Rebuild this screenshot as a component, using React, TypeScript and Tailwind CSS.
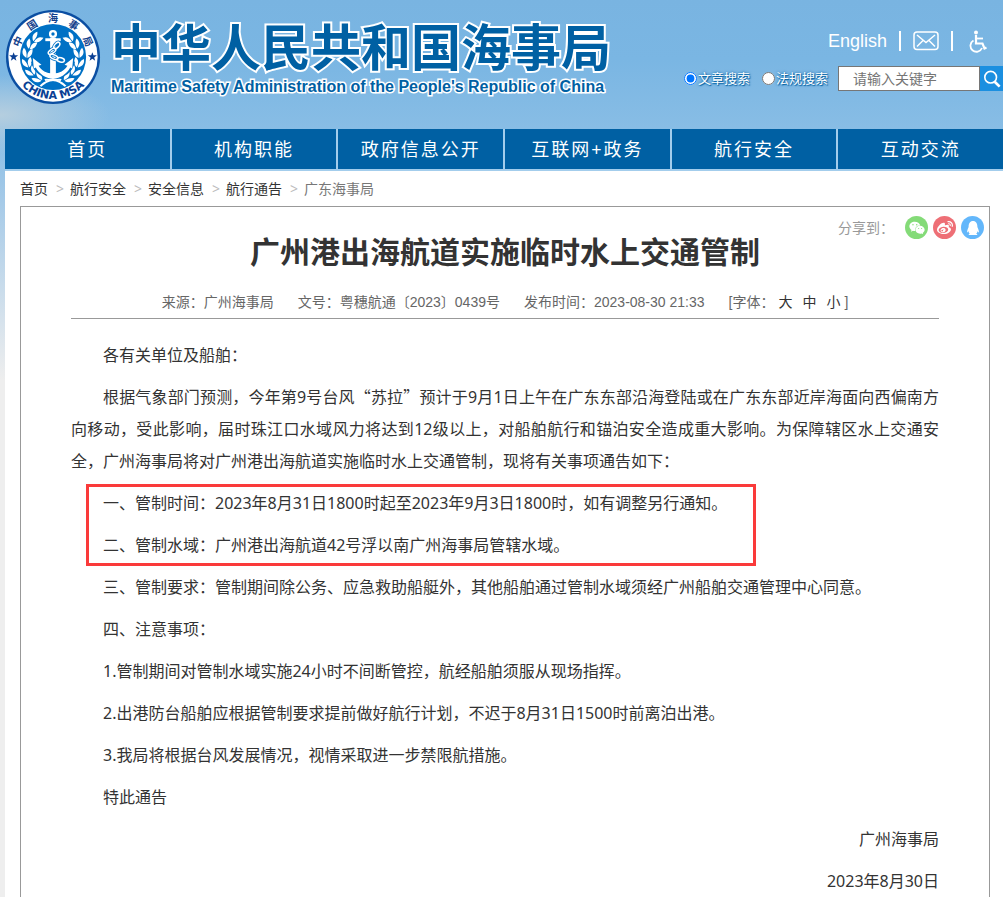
import React from 'react';
import { FaWeixin, FaWeibo, FaQq } from 'react-icons/fa';

const cjk = "font-['Noto_Sans','Noto_Sans_CJK_SC',sans-serif]";
const arial = "font-['Liberation_Sans','Noto_Sans_CJK_SC',sans-serif]";

const navItems = ['首页', '机构职能', '政府信息公开', '互联网+政务', '航行安全', '互动交流'];
const crumbs = ['首页', '航行安全', '安全信息', '航行通告'];

const ring = [
  { t: '中', a: -66 },
  { t: '国', a: -33 },
  { t: '海', a: 0 },
  { t: '事', a: 33 },
  { t: '局', a: 66 },
];

const leaves = [
  { x: 33, y: 30, r: 45 },
  { x: 27, y: 37, r: 25 },
  { x: 23, y: 46, r: 8 },
  { x: 23, y: 56, r: -15 },
  { x: 27, y: 65, r: -35 },
  { x: 34, y: 72, r: -55 },
];

const Emblem: React.FC = () => (
  <svg viewBox="0 0 100 100" className="w-24 h-24 shrink-0" aria-label="中国海事局">
    <circle cx="50" cy="50" r="49" fill="#0a4ea2" />
    <circle cx="50" cy="50" r="46.5" fill="#fff" />
    <circle cx="50" cy="50" r="34.5" fill="#0071c5" />
    <g fontFamily="'Noto Sans CJK SC', sans-serif" fontSize="10.500" fontWeight="700" fill="#123f8c" textAnchor="middle">
      {ring.map((c) => (
        <text key={c.t} x="50" y="14" transform={`rotate(${c.a} 50 50)`}>{c.t}</text>
      ))}
    </g>
    <path id="arc" d="M6 56 A44.5 44.5 0 0 0 94 56" fill="none" />
    <text fontFamily="'DejaVu Sans', sans-serif" fontSize="11.500" fontWeight="700" fill="#0a3f94" textAnchor="middle">
      <textPath href="#arc" startOffset="50%">CHINA MSA</textPath>
    </text>
    <path id="star" d="M9 45l1.200 3.300h3.500l-2.800 2.100 1 3.400L9 51.800l-2.900 2 1-3.400-2.800-2.100h3.500z" fill="#0a3f94" />
    <use href="#star" x="82" />
    {[false, true].map((flip) => (
      <g key={String(flip)} transform={flip ? 'translate(100 0) scale(-1 1)' : undefined} fill="#fff">
        {leaves.map((l) => (
          <g key={l.y} transform={`translate(${l.x} ${l.y}) rotate(${l.r})`}>
            <path d="M0 5C-5 3-6-1-4-5-1-3 0 1 0 5z" />
            <path d="M1 5C0 0 1-3 5-5 6-1 5 3 1 5z" />
          </g>
        ))}
        <path d="M36 80c6-6 12-8 23-7l-1 2c-9-1-15 1-20 6z" />
      </g>
    ))}
    <path d="M50 30v36M31 54c2 9 9 14 19 15 10-1 17-6 19-15" fill="none" stroke="#0071c5" strokeWidth="8" />
    <g fill="none" stroke="#fff">
      <circle cx="50" cy="26" r="3" strokeWidth="2.500" />
      <path d="M42 32h16" strokeWidth="3" />
      <path d="M50 30v38" strokeWidth="6" />
    </g>
    <path d="M29 51l9 7-3 1c3 5 8 8 15 8s12-3 15-8l-3-1 9-7-1 11-2-1c-4 7-10 11-18 12-8-1-14-5-18-12l-2 1z" fill="#fff" />
    <g fill="none" stroke="#0071c5" strokeWidth="3.200">
      <ellipse cx="54" cy="38" rx="4" ry="2.200" transform="rotate(-50 54 38)" />
      <ellipse cx="49" cy="44" rx="4.500" ry="2.200" transform="rotate(-35 49 44)" />
      <ellipse cx="51" cy="50" rx="4.500" ry="2.200" transform="rotate(25 51 50)" />
      <ellipse cx="58" cy="53" rx="4" ry="2.200" transform="rotate(15 58 53)" />
    </g>
    <g fill="none" stroke="#fff" strokeWidth="1.600">
      <ellipse cx="54" cy="38" rx="4" ry="2.200" transform="rotate(-50 54 38)" />
      <ellipse cx="49" cy="44" rx="4.500" ry="2.200" transform="rotate(-35 49 44)" />
      <ellipse cx="51" cy="50" rx="4.500" ry="2.200" transform="rotate(25 51 50)" />
      <ellipse cx="58" cy="53" rx="4" ry="2.200" transform="rotate(15 58 53)" />
    </g>
  </svg>
);

const Header: React.FC = () => (
  <header className="flex justify-between h-[129px] pl-[5px]">
    <div className="flex gap-2.5 pt-[9px]">
      <Emblem />
      <a href="#" className="pt-1 text-[#0060a3] [paint-order:stroke_fill]">
        <h1 className="text-[50px] leading-[62px] font-bold font-['Noto_Sans_CJK_SC',sans-serif] [-webkit-text-stroke:4px_white]">中华人民共和国海事局</h1>
        <p className={`text-base leading-6 font-bold [-webkit-text-stroke:3px_white] ${arial}`}>Maritime Safety Administration of the People's Republic of China</p>
      </a>
    </div>
    <div className={`flex flex-col items-end pt-[26px] text-white ${arial}`}>
      <div className="flex items-center h-[30px] pr-4">
        <a href="#" className="text-lg">English</a>
        <span className="w-0.5 h-5 bg-white mx-3" />
        <a href="#" aria-label="邮箱">
          <svg viewBox="0 0 26 20" className="w-[26px] h-5" fill="none" stroke="#fff" strokeWidth="1.500">
            <rect x="1" y="1" width="24" height="17.500" rx="3" />
            <path d="M4 4l9 7.500L22 4M4 15.500l6-6M22 15.500l-6-6" />
          </svg>
        </a>
        <span className="w-0.5 h-5 bg-white ml-3 mr-4" />
        <a href="#" aria-label="无障碍">
          <svg viewBox="0 0 18 23" className="w-[18px] h-[23px]" fill="none" stroke="#fff" strokeWidth="1.800">
            <circle cx="7" cy="2.500" r="2" fill="#fff" stroke="none" />
            <path d="M7 5v8.500h6.500l2 5 2-1" strokeWidth="2.200" />
            <path d="M7 8.500h7" />
            <path d="M4.500 10.500a6 6 0 1 0 8.500 7.500" />
          </svg>
        </a>
      </div>
      <form className="flex items-center mt-[10px] h-[25px]">
        <label className="flex items-center text-[13px] mr-3 [text-shadow:0_0_3px_#0060a3,1px_1px_1px_#0060a3]">
          <input type="radio" name="kind" defaultChecked className="w-[13px] h-[13px] mr-px" />文章搜索
        </label>
        <label className="flex items-center text-[13px] mr-[10px] [text-shadow:0_0_3px_#0060a3,1px_1px_1px_#0060a3]">
          <input type="radio" name="kind" className="w-[13px] h-[13px] mr-px" />法规搜索
        </label>
        <input
          type="text"
          aria-label="关键字"
          placeholder="请输入关键字"
          className="w-[142px] h-[25px] bg-white border border-[#767676] pl-[14px] text-sm text-gray-700 placeholder:text-[#757575]"
        />
        <button type="button" aria-label="搜索" className="w-[23px] h-[25px] bg-[#1b8fe0] flex items-center justify-center">
          <svg viewBox="0 0 20 20" className="w-[18px] h-[18px]" fill="none" stroke="#fff">
            <circle cx="8.500" cy="8" r="6.500" strokeWidth="1.800" />
            <path d="M13 13l5.500 5.500" strokeWidth="3" />
          </svg>
        </button>
      </form>
    </div>
  </header>
);

const Meta: React.FC = () => (
  <div className={`flex justify-center gap-6 pb-1 border-b border-[#999] text-sm leading-6 text-[#666] ${arial}`}>
    <span>来源：广州海事局</span>
    <span>文号：粤穗航通〔2023〕0439号</span>
    <span>发布时间：2023-08-30 21:33</span>
    <span className="flex">
      [字体：
      <button type="button" className="text-[#333] ml-1">大</button>
      <button type="button" className="text-[#333] mx-2.5">中</button>
      <button type="button" className="text-[#333] mr-1">小</button>]
    </span>
  </div>
);

const Share: React.FC = () => (
  <div className="flex justify-end items-center gap-[5px] h-[23px] pr-[5px] text-sm text-[#999]">
    <span className="mr-1.5">分享到：</span>
    <a href="#" aria-label="微信" className="w-[23px] h-[23px] rounded-full bg-[#84db78] text-white flex items-center justify-center"><FaWeixin className="w-4 h-4" /></a>
    <a href="#" aria-label="微博" className="w-[23px] h-[23px] rounded-full bg-[#ee6f76] text-white flex items-center justify-center"><FaWeibo className="w-4 h-4" /></a>
    <a href="#" aria-label="QQ" className="w-[23px] h-[23px] rounded-full bg-[#63b7fb] text-white flex items-center justify-center"><FaQq className="w-3.5 h-3.5" /></a>
  </div>
);

const App: React.FC = () => {
  return (
    <div className={`min-h-screen bg-[radial-gradient(ellipse_110px_40px_at_0px_115px,#b5cedf_0%,transparent_100%),linear-gradient(to_bottom,#79b4e1_0px,#7ab6e3_60px,#88bde5_129px,#a5cae8_200px,#eeeeee_380px)] ${cjk}`}>
      <Header />
      <div className="ml-[5px]">
        <nav className="grid grid-cols-6 gap-0.5 bg-[#a3cdec] pb-0.5">
          {navItems.map((item) => (
            <a key={item} href="#" className="h-10 bg-[#0060a3] text-white text-lg tracking-[2px] flex items-center justify-center">
              {item}
            </a>
          ))}
        </nav>
        <main className="bg-white pl-[15px] pr-[13px]">
          <div className="flex items-center h-[35px] text-sm text-[#333]">
            {crumbs.map((c) => (
              <React.Fragment key={c}>
                <a href="#">{c}</a>
                <span className="w-[22px] pl-2 text-[#bbb]">&gt;</span>
              </React.Fragment>
            ))}
            <span className="text-[#777]">广东海事局</span>
          </div>

          <article className="border border-b-0 border-[#999] px-[50px] pt-[9px] text-base leading-8 text-[#333]">
            <div className="-mr-[50px]"><Share /></div>
            <h2 className="text-[30px] leading-[50px] font-bold text-center -mt-3 mb-[13px]">广州港出海航道实施临时水上交通管制</h2>
            <Meta />
            <div className="flex flex-col gap-2.5 pt-5 indent-8">
              <p>各有关单位及船舶：</p>
              <p className="text-justify">
                根据气象部门预测，今年第9号台风<span className="leading-none font-['Noto_Sans_CJK_SC',sans-serif]">“苏拉”</span>预计于9月1日上午在广东东部沿海登陆或在广东东部近岸海面向西偏南方向移动，受此影响，届时珠江口水域风力将达到12级以上，对船舶航行和锚泊安全造成重大影响。为保障辖区水上交通安全，广州海事局将对广州港出海航道实施临时水上交通管制，现将有关事项通告如下：
              </p>
              {/* highlighted restriction window and area */}
              <div className="relative flex flex-col gap-2.5">
                <div className="absolute -top-[3px] -bottom-[5px] left-[15px] w-[670px] border-3 border-[#fa3a3a] pointer-events-none" />
                <p>一、管制时间：2023年8月31日1800时起至2023年9月3日1800时，如有调整另行通知。</p>
                <p>二、管制水域：广州港出海航道42号浮以南广州海事局管辖水域。</p>
              </div>
              <p>三、管制要求：管制期间除公务、应急救助船艇外，其他船舶通过管制水域须经广州船舶交通管理中心同意。</p>
              <p>四、注意事项：</p>
              <p>1.管制期间对管制水域实施24小时不间断管控，航经船舶须服从现场指挥。</p>
              <p>2.出港防台船舶应根据管制要求提前做好航行计划，不迟于8月31日1500时前离泊出港。</p>
              <p>3.我局将根据台风发展情况，视情采取进一步禁限航措施。</p>
              <p>特此通告</p>
              <p className="text-right">广州海事局</p>
              <p className="text-right">2023年8月30日</p>
            </div>
          </article>
        </main>
      </div>
    </div>
  );
};

export default App;
